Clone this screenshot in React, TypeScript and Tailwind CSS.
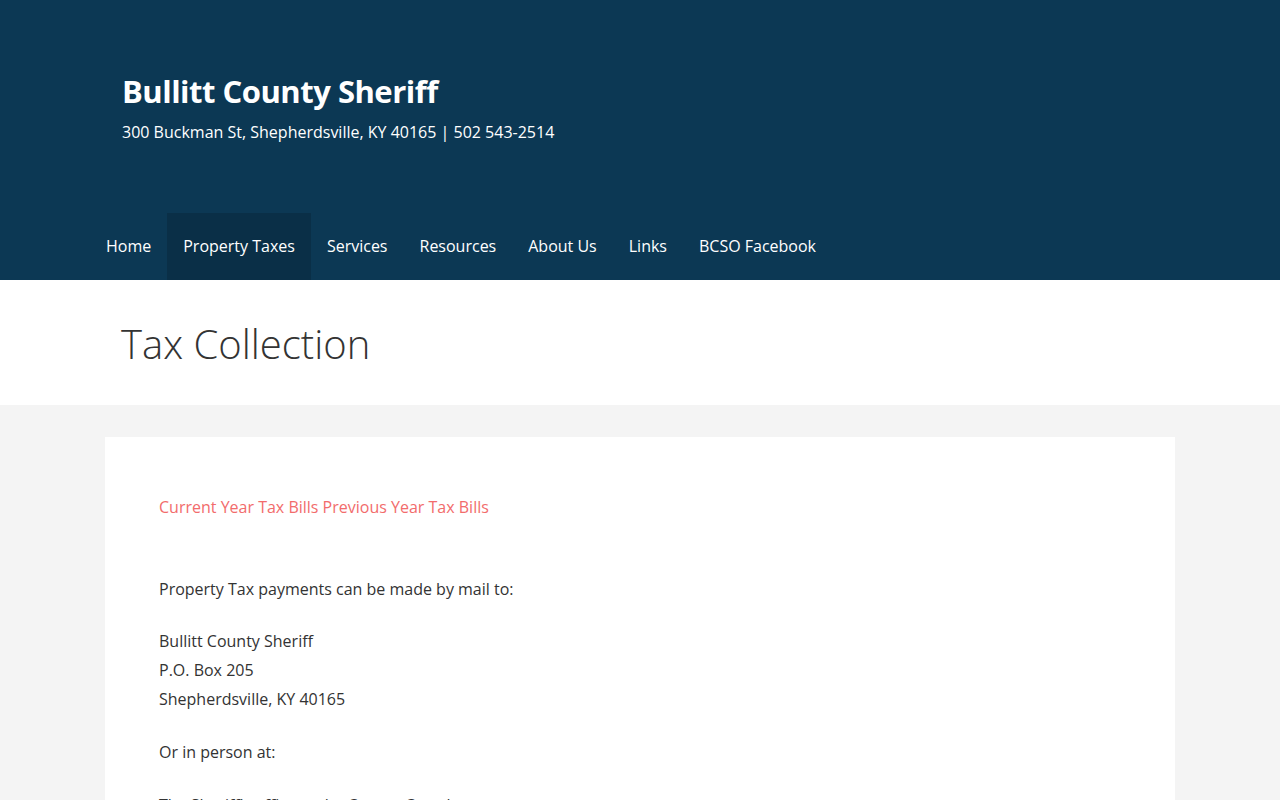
import React from "react";

const nav = ["Home", "Property Taxes", "Services", "Resources", "About Us", "Links", "BCSO Facebook"];

export default function App() {
  return (
    <div className="min-h-[800px] bg-[#f4f4f4] font-['Open_Sans',sans-serif] text-[#333]">
      <header className="bg-[#0c3854] text-white">
        <div className="mx-[90px] pt-[70px]">
          <div className="px-[32px]">
            <h1 className="text-[31px] font-bold leading-[42px] tracking-[-0.5px]">Bullitt County Sheriff</h1>
            <p className="mt-[8px] text-[16px] leading-[24px]">300 Buckman St, Shepherdsville, KY 40165 | 502 543-2514</p>
          </div>
          <nav className="mt-[69px] flex">
            {nav.map((n) => (
              <a
                key={n}
                className={`block h-[67px] px-[16px] text-[16px] leading-[67px] ${n === "Property Taxes" ? "bg-[#0a2f47]" : ""}`}
              >
                {n}
              </a>
            ))}
          </nav>
        </div>
      </header>
      <section className="bg-white h-[125px]">
        <div className="mx-[90px] px-[31px]">
          <h2 className="pt-[38px] text-[40px] font-light leading-[52px] text-[#333]">Tax Collection</h2>
        </div>
      </section>
      <main className="pt-[32px]">
        <div className="mx-[105px] bg-white px-[54px] pt-[56px] pb-[40px] text-[16px] leading-[29px]">
          <p className="text-[#f26c6c]">
            <a>Current Year Tax Bills</a> <a>Previous Year Tax Bills</a>
          </p>
          <p className="mt-[53px]">Property Tax payments can be made by mail to:</p>
          <p className="mt-[23px]">
            Bullitt County Sheriff
            <br />
            P.O. Box 205
            <br />
            Shepherdsville, KY 40165
          </p>
          <p className="mt-[24px]">Or in person at:</p>
          <p className="mt-[24px]">The Sheriff's office at the County Courthouse</p>
        </div>
      </main>
    </div>
  );
}
